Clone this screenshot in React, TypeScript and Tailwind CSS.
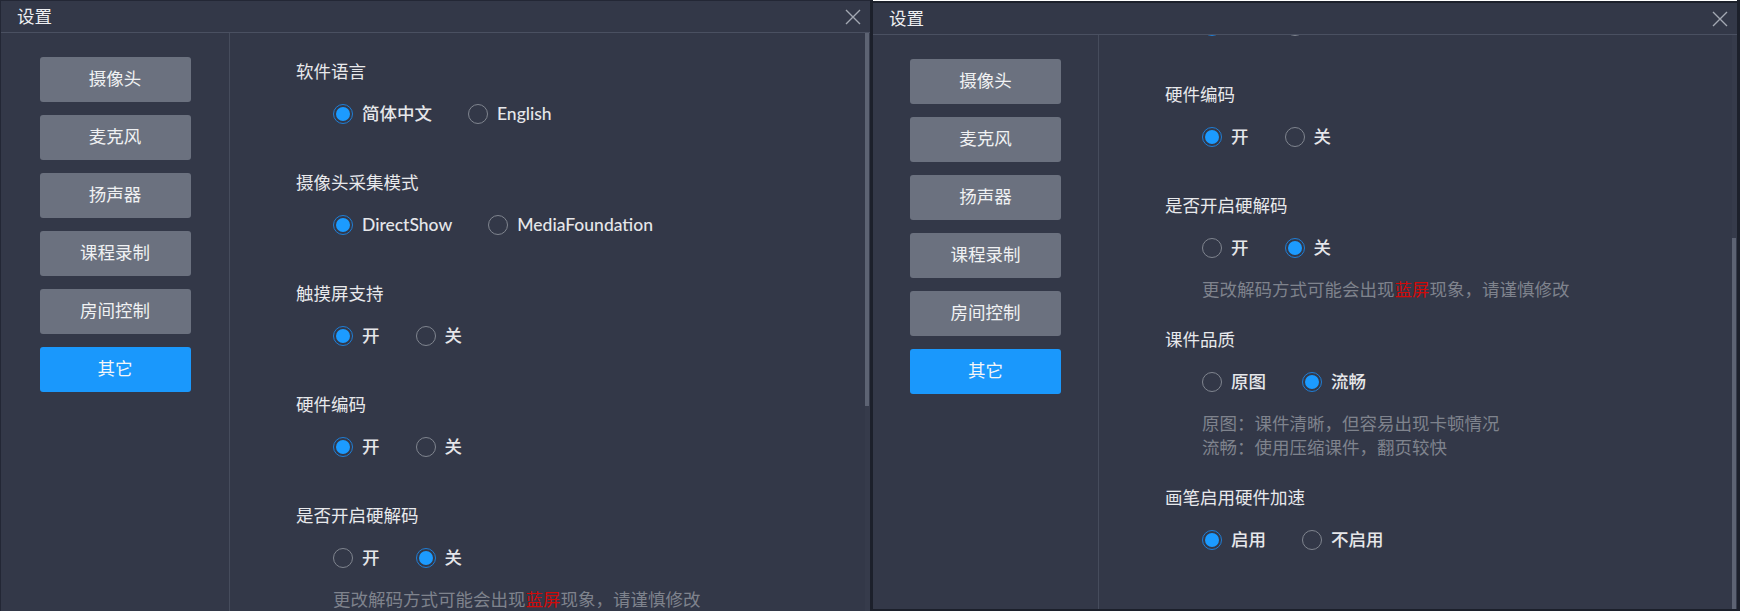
import React from "react";

type Opt = { label: string; checked?: boolean };
type Section = { title: string; options: Opt[]; hint?: React.ReactNode[] };

const sections: Section[] = [
  { title: "软件语言", options: [{ label: "简体中文", checked: true }, { label: "English" }] },
  { title: "摄像头采集模式", options: [{ label: "DirectShow", checked: true }, { label: "MediaFoundation" }] },
  { title: "触摸屏支持", options: [{ label: "开", checked: true }, { label: "关" }] },
  { title: "硬件编码", options: [{ label: "开", checked: true }, { label: "关" }] },
  {
    title: "是否开启硬解码",
    options: [{ label: "开" }, { label: "关", checked: true }],
    hint: [
      <>
        更改解码方式可能会出现<span className="text-[#d10a0a]">蓝屏</span>现象，请谨慎修改
      </>,
    ],
  },
  {
    title: "课件品质",
    options: [{ label: "原图" }, { label: "流畅", checked: true }],
    hint: [<>原图：课件清晰，但容易出现卡顿情况</>, <>流畅：使用压缩课件，翻页较快</>],
  },
  { title: "画笔启用硬件加速", options: [{ label: "启用", checked: true }, { label: "不启用" }] },
];

const menu = ["摄像头", "麦克风", "扬声器", "课程录制", "房间控制", "其它"];

function Radio({ checked }: { checked?: boolean }) {
  if (checked) {
    return (
      <span className="flex h-5 w-5 shrink-0 items-center justify-center rounded-full border-[1.5px] border-[#1f7ed6]">
        <span className="h-[14px] w-[14px] rounded-full bg-[#1c9bff]" />
      </span>
    );
  }
  return <span className="h-5 w-5 shrink-0 rounded-full border-[1.5px] border-[#80858f]" />;
}

function CloseIcon() {
  return (
    <svg width="16" height="16" viewBox="0 0 16 16" fill="none">
      <path d="M1 1 L15 15 M15 1 L1 15" stroke="#a3a8b2" strokeWidth="1.4" />
    </svg>
  );
}

function Content() {
  return (
    <div className="flex flex-col pt-[27px] pb-[55px]">
      {sections.map((s, i) => (
        <div key={i} className={s.hint ? "mb-[26px] flex flex-col" : "mb-[45px] flex flex-col"}>
          <div className="h-6 text-[17.5px] leading-6 text-[#e8e9ec]">{s.title}</div>
          <div className="mt-[18px] ml-[37px] flex h-6 items-center gap-x-[36px]">
            {s.options.map((o, j) => (
              <div key={j} className="flex items-center gap-[9px]">
                <Radio checked={o.checked} />
                <span className="text-[17.5px] leading-6 font-medium text-[#e6e7ea]">{o.label}</span>
              </div>
            ))}
          </div>
          {s.hint && (
            <div className="mt-[18px] ml-[37px] flex flex-col text-[17.5px] leading-6 text-[#7f838d]">
              {s.hint.map((h, k) => (
                <div key={k} className="whitespace-nowrap">
                  {h}
                </div>
              ))}
            </div>
          )}
        </div>
      ))}
    </div>
  );
}

function Dialog({ right }: { right?: boolean }) {
  return (
    <div
      className={
        right
          ? "flex h-[606px] w-[864px] flex-col bg-[#333848]"
          : "flex h-[611px] w-[870px] flex-col border-t border-l border-[#232735] bg-[#333848]"
      }
    >
      <div className="flex h-[32px] shrink-0 items-center justify-between border-b border-[#4a5061] pr-[9px] pl-[16px]">
        <span className="text-[17.5px] leading-6 text-[#eeeff2]">设置</span>
        <CloseIcon />
      </div>
      <div className="flex min-h-0 flex-1">
        <div
          className={
            right
              ? "flex w-[226px] shrink-0 flex-col items-center gap-[13px] border-r border-[#464c5c] pt-[24px]"
              : "flex w-[229px] shrink-0 flex-col items-center gap-[13px] border-r border-[#464c5c] pt-[24px]"
          }
        >
          {menu.map((m, i) => (
            <div
              key={m}
              className={
                i === menu.length - 1
                  ? "flex h-[45px] w-[151px] items-center justify-center rounded-[3px] bg-[#1a98fc] text-[17.5px] text-[#f4f6f8]"
                  : "flex h-[45px] w-[151px] items-center justify-center rounded-[3px] bg-[#6b717f] text-[17.5px] text-[#f0f1f3]"
              }
            >
              {m}
            </div>
          ))}
        </div>
        <div className="min-w-0 flex-1 overflow-hidden pl-[66px]">
          <div className={right ? "-mt-[312px]" : "mt-0"}>
            <Content />
          </div>
        </div>
        <div className="relative w-[5px] shrink-0 bg-[#363b4b]">
          <div
            className={
              right
                ? "absolute right-[1px] bottom-0 h-[371px] w-[4px] bg-[#5d6373]"
                : "absolute top-0 right-[1px] h-[373px] w-[4px] bg-[#5d6373]"
            }
          />
        </div>
      </div>
    </div>
  );
}

export default function App() {
  return (
    <div
      className="flex h-[611px] w-[1740px] overflow-hidden bg-[#1c202b]"
      style={{ fontFamily: 'Lato, "Noto Sans CJK SC", sans-serif' }}
    >
      <Dialog />
      <div className="ml-[3px] flex flex-col border-t border-white pt-[2px]">
        <Dialog right />
      </div>
    </div>
  );
}
